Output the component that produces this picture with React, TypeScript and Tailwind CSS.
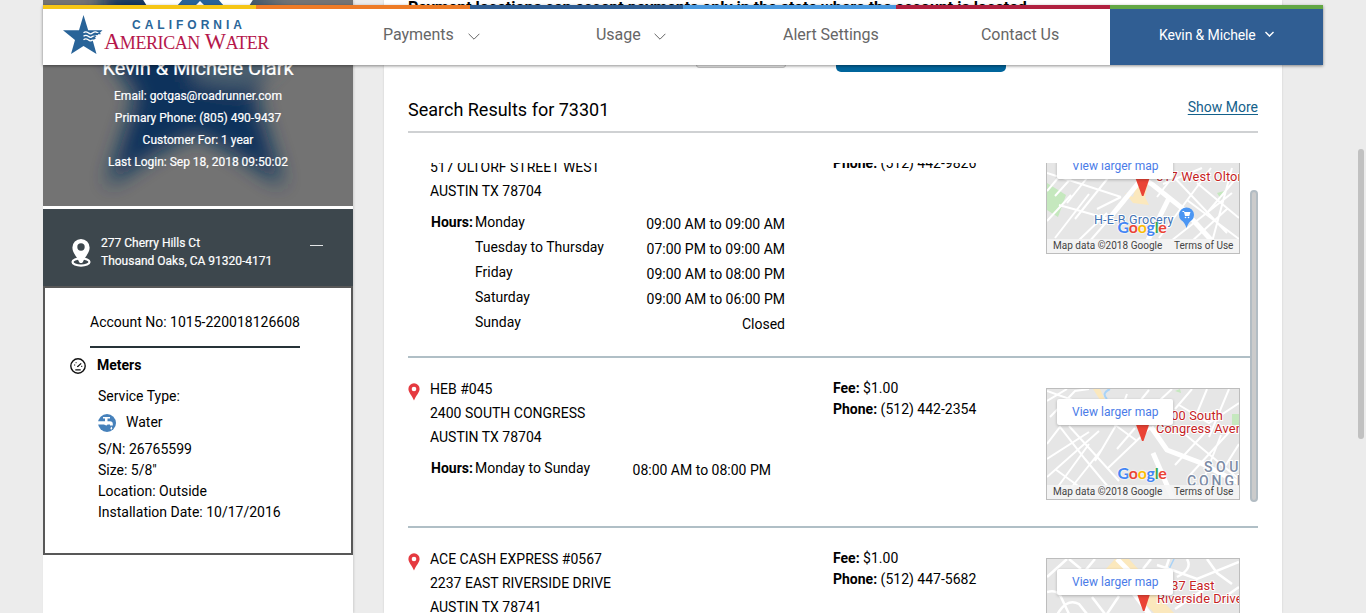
import React from "react";

type Hours = { day: string; time: string };
type Place = {
  name: string;
  street: string;
  city: string;
  phone: string;
  hours: Hours[];
  timeWidth: string;
  height: string;
  map: React.ReactNode;
};

const STRIPES = ["bg-[#f6c615]", "bg-[#ee7b26]", "bg-[#305e93]", "bg-[#4a9ae0]", "bg-[#b0203f]", "bg-[#62a744]"];

function BrandStar({ className, viewBox }: { className: string; viewBox: string }) {
  return (
    <svg className={className} viewBox={viewBox}>
      <path
        fill="#286398"
        d="M20.5 0 25.2 15.3H39.5L29.6 25 33.5 39 20.5 31 8 39 12 25 0 15.3H16Z"
      />
      <path
        fill="none"
        stroke="#fff"
        strokeWidth="1.3"
        d="M20.5 17.8q2.3-2 4.7 0t4.7 0 4.7 0 4.7 0M20.5 21.3q2.3-2 4.7 0t4.7 0 4.7 0M20.5 24.800q2.3-2 4.7 0t4.7 0"
      />
      <path fill="none" stroke="#286398" strokeWidth="1.2" d="M29.5 19.3q2 1.6 4 0t4-.3M29 23q1.7 1.5 3.4 0" />
    </svg>
  );
}

function Chevron({ className, width }: { className: string; width: number }) {
  return (
    <svg className={className} viewBox="0 0 12 7" fill="none" stroke="currentColor" strokeWidth={width}>
      <path d="M.6.8 6 6.2 11.4.8" />
    </svg>
  );
}

function Header() {
  return (
    <header className="absolute left-[43px] top-[5px] z-20 h-[60px] w-[1280px] bg-white shadow-[0_1px_3px_rgba(0,0,0,0.45)]">
      <div className="flex h-1">
        {STRIPES.map((c) => (
          <div key={c} className={`flex-1 ${c}`} />
        ))}
      </div>
      <div className="flex h-14">
        <div className="flex w-[289px] shrink-0 pl-5 pt-[6px]">
          <BrandStar className="h-10 w-10 shrink-0" viewBox="0 0 40 40" />
          <div className="w-[168px] pl-px">
            <div className="pl-7 pt-[3px] font-['Liberation_Sans'] text-[12px] font-bold leading-[14px] tracking-[4px] text-[#2a6699]">
              CALIFORNIA
            </div>
            <div className="whitespace-nowrap font-['Liberation_Serif'] text-[22.500px] leading-[19px] tracking-[-0.42px] text-[#b5174b]">
              A<span className="text-[18px]">MERICAN</span> W<span className="text-[18px]">ATER</span>
            </div>
          </div>
        </div>
        <nav className="flex grow items-start pt-[14px] text-[16px] leading-6 tracking-[-0.04px] text-[#666]">
          <a className="ml-[51px] flex w-[213px] items-center">
            Payments <Chevron className="ml-[14px] mt-[2px] h-[7px] w-3" width={1} />
          </a>
          <a className="flex w-[187px] items-center">
            Usage <Chevron className="ml-[13px] mt-[2px] h-[7px] w-3" width={1} />
          </a>
          <a className="w-[198px]">Alert Settings</a>
          <a className="whitespace-nowrap">Contact Us</a>
        </nav>
        <div className="flex w-[213px] items-start bg-[#305e93] pl-[49px] pt-[14px] text-[14px] leading-6 tracking-[-0.12px] text-white">
          Kevin &amp; Michele
          <Chevron className="ml-[9px] mt-2 h-[6px] w-[9px]" width={2} />
        </div>
      </div>
    </header>
  );
}

function Profile() {
  return (
    <section className="relative h-[206px] overflow-hidden bg-[#737373]">
      <svg className="absolute left-0 top-0 h-[206px] w-[310px]" viewBox="0 0 310 206">
        <defs>
          <filter id="soft" x="-20%" y="-20%" width="140%" height="140%">
            <feGaussianBlur stdDeviation="10" />
          </filter>
        </defs>
        <g filter="url(#soft)">
          <path fill="#0b335b" d="M64 186 94 96 62 50 60-10H220L226 60 212 96 240 186 190 152 153 134 115 152Z" />
          <path fill="#4b6070" d="M148 0H235V62L200 90 150 82Z" />
        </g>
        <circle cx="155" cy="-29" r="62" fill="#fff" />
        <path fill="#286398" d="M140-1H175L181 6H162L157 1 152 6H134Z" />
      </svg>
      <div className="relative flex flex-col items-center pt-[54px] text-[12px] leading-[22px] text-white [-webkit-text-stroke:0.2px_#fff]">
        <h2 className="mb-[3px] text-[20px] font-normal leading-7">Kevin &amp; Michele Clark</h2>
        <p>Email: gotgas@roadrunner.com</p>
        <p>Primary Phone: (805) 490-9437</p>
        <p>Customer For: 1 year</p>
        <p>Last Login: Sep 18, 2018 09:50:02</p>
      </div>
    </section>
  );
}

function Sidebar() {
  return (
    <aside className="h-[613px] w-[310px] shrink-0 bg-white shadow-[1px_0_2px_rgba(0,0,0,0.12)]">
      <Profile />
      <div className="mt-[3px] flex h-[77px] bg-[#3d474d] pl-7 text-[12px] leading-[18px] text-white [-webkit-text-stroke:0.2px_#fff]">
        <svg className="mt-[30px] h-7 w-5 shrink-0" viewBox="0 0 20 28">
          <ellipse cx="10" cy="23" rx="8.500" ry="3.600" fill="none" stroke="#fff" strokeWidth="2.200" />
          <path
            d="M10 0a8.6 8.6 0 0 0-8.6 8.8C1.4 14 6 17.5 8.2 23.2q1.8 1.8 3.6 0C14 17.500 18.600 14 18.600 8.800A8.600 8.600 0 0 0 10 0Z"
            fill="#fff"
          />
          <circle cx="10" cy="8" r="3.700" fill="#3d474d" />
        </svg>
        <div className="ml-[10px] w-[209px] pt-[25px]">
          277 Cherry Hills Ct
          <br />
          Thousand Oaks, CA 91320-4171
        </div>
        <div className="mt-9 h-px w-[13px] bg-[#e4e6e7]" />
      </div>
      <div className="h-[269px] border-2 border-[#585858] pt-[22px] text-[14px] leading-[21px] text-black">
        <div className="ml-[45px] h-[38px] w-[210px] whitespace-nowrap border-b-2 border-[#263238] pt-[2px]">
          Account No: 1015-220018126608
        </div>
        <div className="flex pl-[25px] pt-[7px] font-bold">
          <svg className="mt-[3px] h-4 w-4" viewBox="0 0 16 16" fill="none" stroke="#111" strokeWidth="1.400">
            <circle cx="8" cy="8" r="7.200" />
            <path d="M7.500 8.700 11.200 5.400M5.300 11.800h5.400" strokeWidth="1.200" />
            <path d="M4 7h1.200M5.600 4.700h1M11 8.300h1.300" strokeWidth="1" />
            <circle cx="7.600" cy="8.500" r=".6" fill="#111" stroke="none" />
          </svg>
          <span className="ml-[11px]">Meters</span>
        </div>
        <div className="pl-[53px] pt-[10px]">
          <div>Service Type:</div>
          <div className="flex h-8 items-start pt-[5px]">
            <svg className="mt-[2px] h-[18px] w-[18px]" viewBox="0 0 18 18">
              <circle cx="9" cy="9" r="9" fill="#4681bb" />
              <path
                fill="#fff"
                d="M5 3h7v1.500H9.500V7.300H12Q14.800 7.300 14.800 10V11.500H12V10.500H9.500Q8.700 12 7 11L6 10.500H0V7.300H7V4.500H5ZM13.400 12.600 14.300 14.300Q14.200 15.500 13.300 15.500T12.400 14.300Z"
              />
            </svg>
            <span className="ml-[10px]">Water</span>
          </div>
          <div>S/N: 26765599</div>
          <div>Size: 5/8"</div>
          <div>Location: Outside</div>
          <div>Installation Date: 10/17/2016</div>
        </div>
      </div>
    </aside>
  );
}

const LABEL = "font-['Roboto'] [paint-order:stroke] stroke-white stroke-[2px]";

const oltorfMap = (
  <svg className="h-[110px] w-[192px]" viewBox="0 0 192 110">
    <rect width="192" height="110" fill="#e6e6e6" />
    <path fill="#c5e8be" d="M0 40 19 52 11 74 0 67ZM170 50 177 48 174 56Z" />
    <path fill="#fbe8bd" d="M78 50 86 54 92 32 104 28 98 54 102 62 86 60Z" />
    <path
      fill="none"
      stroke="#fff"
      strokeWidth="2"
      d="M0 48 22 22M8 53 36 22M20 60 48 25M0 30 74 54M12 62 62 76M28 76 65 30M50 66 74 54M0 78 24 52M8 95 42 51M30 99 60 70M42 99 78 58M124 31 180 90M116 41 155 25M110 54 128 31M112 95 164 25M124 98 185 50M144 99 180 66M150 40 192 75M140 57 192 96M185 25 165 99M192 32 160 70"
    />
    <path fill="none" stroke="#fff" strokeWidth="5" d="M73 20 106 42 135 65 166 99M65 72 93 38M100 99 123 53" />
    <text x="109" y="38" fontSize="12.800" letterSpacing=".12" fill="#c5221f" className={LABEL}>517 West Oltorf St</text>
    <text x="47" y="80.500" fontSize="12.500" letterSpacing=".2" fill="#4273b5" className={LABEL}>H-E-B Grocery</text>
    <path fill="#4b96f3" d="M139 84Q137 78 133.500 76a7.500 7.500 0 1 1 11 0Q141 78 139 84Z" transform="translate(.5 1)" />
    <path fill="#fff" d="M135.500 68h1.500l.5 1h6l-1.200 4h-4.300l-1-4H135.500Z" />
    <circle cx="138.500" cy="74.500" r=".8" fill="#fff" /><circle cx="141.500" cy="74.500" r=".8" fill="#fff" />
    <path fill="#ea4335" d="M88 34H103L96.500 53H95Z" />
  </svg>
);

const congressMap = (
  <svg className="h-[110px] w-[192px]" viewBox="0 0 192 110">
    <rect width="192" height="110" fill="#e6e6e6" />
    <path fill="none" stroke="#a9d3f7" strokeWidth="2" d="M63 0Q54 4 60 10" />
    <path fill="#fbe8bd" d="M46 0H53L58 11H53Z" />
    <path fill="#c5e8be" d="M128 2 133 0 134 4ZM185 25H192V36H185Z" />
    <path
      fill="none"
      stroke="#fff"
      strokeWidth="2"
      d="M0 12 20 0M3 28 28 2 42 0M0 55 13 38 38 70 62 99M22 37 72 92M0 70 42 43M0 88 52 42M10 99 42 55M24 99 55 60M8 80 34 99M80 5 68 38 48 72M70 60 88 39M60 80 104 38M102 1 93 12M125 0 112 12M0 2 28 12 55 11M145 0 128 20M132 16 162 34 192 14M150 24 160 0M134 42 192 90M128 76 164 37M142 87 185 40M154 97 174 46M165 98 192 55M182 0 162 48M60 30 90 52"
    />
    <path fill="none" stroke="#fff" strokeWidth="5" d="M104 38 120 61 154 74 192 94M106 64 126 110" />
    <text x="117" y="30.500" fontSize="12.800" letterSpacing=".1" fill="#c5221f" className={LABEL}>400 South</text>
    <text x="109" y="44" fontSize="12.800" letterSpacing=".12" fill="#c5221f" className={LABEL}>Congress Avenue</text>
    <text x="157" y="83" fontSize="14" fontWeight="500" letterSpacing="3.600" fill="#7c8ba5" className={LABEL}>SOUTH</text>
    <text x="140" y="97" fontSize="14" fontWeight="500" letterSpacing="2.900" fill="#7c8ba5" className={LABEL}>CONGRESS</text>
    <path fill="#ea4335" d="M88 33H103L96.500 52H95Z" />
  </svg>
);

const riversideMap = (
  <svg className="h-[110px] w-[192px]" viewBox="0 0 192 110">
    <rect width="192" height="110" fill="#e6e6e6" />
    <path fill="#fbe8bd" d="M58 11 68 0H82L92 11ZM86 32 104 30 128 55H108Z" />
    <path fill="none" stroke="#a9d3f7" strokeWidth="1.500" d="M127 0 119 16" />
    <path
      fill="none"
      stroke="#fff"
      strokeWidth="2.500"
      d="M0 18 20 0M22 0 34 10M48 0 38 12M0 33Q10 30 14 38L22 55M8 60Q18 38 32 45L44 60M45 38 58 55M60 55 72 37M110 6 128 12 150 20 192 3M122 0 118 12M130 18Q146 10 140 0M128 50 165 25M160 0 170 14 185 25M175 40 192 28M104 0 96 10"
    />
    <path fill="none" stroke="#fff" strokeWidth="5" d="M70 0 82 12M86 33 106 60" />
    <text x="117" y="30.500" fontSize="12.800" letterSpacing=".1" fill="#c5221f" className={LABEL}>237 East</text>
    <text x="110" y="43.500" fontSize="12.800" letterSpacing=".12" fill="#c5221f" className={LABEL}>Riverside Drive</text>
    <path fill="#ea4335" d="M89 32H104L97.500 52H96Z" />
  </svg>
);

const PLACES: Place[] = [
  {
    name: "HEB #012",
    street: "517 OLTORF STREET WEST",
    city: "AUSTIN TX 78704",
    phone: "(512) 442-9826",
    hours: [
      { day: "Monday", time: "09:00 AM to 09:00 AM" },
      { day: "Tuesday to Thursday", time: "07:00 PM to 09:00 AM" },
      { day: "Friday", time: "09:00 AM to 08:00 PM" },
      { day: "Saturday", time: "09:00 AM to 06:00 PM" },
      { day: "Sunday", time: "Closed" },
    ],
    timeWidth: "w-[310px]",
    height: "h-[246px]",
    map: oltorfMap,
  },
  {
    name: "HEB #045",
    street: "2400 SOUTH CONGRESS",
    city: "AUSTIN TX 78704",
    phone: "(512) 442-2354",
    hours: [{ day: "Monday to Sunday", time: "08:00 AM to 08:00 PM" }],
    timeWidth: "w-[296px]",
    height: "h-[170px]",
    map: congressMap,
  },
  {
    name: "ACE CASH EXPRESS #0567",
    street: "2237 EAST RIVERSIDE DRIVE",
    city: "AUSTIN TX 78741",
    phone: "(512) 447-5682",
    hours: [],
    timeWidth: "w-[296px]",
    height: "h-[170px]",
    map: riversideMap,
  },
];

function MapCard({ children }: { children: React.ReactNode }) {
  return (
    <div className="relative mt-[30px] h-28 w-[194px] shrink-0 overflow-hidden border border-[#bdbdbd]">
      {children}
      <div className="absolute left-[10px] top-[10px] h-[26px] w-[116px] rounded-[2px] bg-white pl-[15px] text-[12px] leading-[26px] tracking-[0.02px] text-[#4a7be8] shadow-[0_1px_3px_rgba(0,0,0,0.25)]">
        View larger map
      </div>
      <div className="absolute left-[70.500px] top-[74px] font-['Lato'] text-[16px] font-bold leading-5 tracking-[-0.3px] [text-shadow:0_0_2px_#fff,0_0_2px_#fff]">
        <span className="text-[#4285f4]">G</span>
        <span className="text-[#ea4335]">o</span>
        <span className="text-[#fbbc05]">o</span>
        <span className="text-[#4285f4]">g</span>
        <span className="text-[#34a853]">l</span>
        <span className="text-[#ea4335]">e</span>
      </div>
      <div className="absolute bottom-0 left-0 flex h-[14px] w-full whitespace-nowrap bg-[#f5f5f5]/85 pl-[6px] text-[10px] leading-[14px] tracking-[0.02px] text-[#444]">
        <span className="w-[121px]">Map data ©2018 Google</span>
        <span>Terms of Use</span>
      </div>
    </div>
  );
}

function PlaceRow({ place }: { place: Place }) {
  return (
    <article className={`flex shrink-0 border-b-2 border-[#b0bfc6] text-[14px] text-black ${place.height}`}>
      <svg className="mt-[25px] h-[18px] w-3 shrink-0" viewBox="0 0 12 18">
        <path fill="#e53a40" d="M6 .3A5.600 5.600 0 0 0 .4 6C.4 9.500 4 12.500 6 17.500 8 12.500 11.600 9.500 11.600 6A5.600 5.600 0 0 0 6 .3Z" />
        <circle cx="6" cy="6" r="2.300" fill="#fff" />
      </svg>
      <div className="ml-[10px] w-[403px] shrink-0 pt-[19px] leading-6">
        <div>{place.name}</div>
        <div>{place.street}</div>
        <div>{place.city}</div>
        <div className="ml-px flex pt-[7px]">
          {place.hours.length > 0 && <b className="w-11 shrink-0 font-bold">Hours:</b>}
          <div className={place.timeWidth}>
            {place.hours.map((h) => (
              <div key={h.day} className="flex h-[25px] justify-between">
                <span>{h.day}</span>
                <span className="pt-[2px]">{h.time}</span>
              </div>
            ))}
          </div>
        </div>
      </div>
      <div className="w-[213px] shrink-0 pt-5 leading-[21px]">
        <div><b>Fee:</b> $1.00</div>
        <div><b>Phone:</b> {place.phone}</div>
      </div>
      <MapCard>{place.map}</MapCard>
    </article>
  );
}

function Results() {
  return (
    <main className="h-[613px] w-[898px] shrink-0 bg-white px-6 shadow-[0_0_2px_rgba(0,0,0,0.12)]">
      <div className="h-[18px] whitespace-nowrap text-[16px] font-bold leading-[15px] text-black">
        Payment locations can accept payments only in the state where the account is located.
      </div>
      <div className="flex h-[54px] items-end pl-72">
        <div className="mb-1 h-[34px] w-[90px] rounded-[3px] border border-[#c4c4c4] bg-[#f1f1f1]" />
        <div className="ml-[50px] h-[38px] w-[170px] rounded-[5px] bg-[#00659c]" />
      </div>
      <div className="flex h-[61px] justify-between border-b-2 border-[#cfd1d3] text-black">
        <h1 className="pt-[26px] text-[18px] leading-6">Search Results for 73301</h1>
        <a className="pt-[25px] text-[14px] leading-5 text-[#14618b] underline underline-offset-2">Show More</a>
      </div>
      <div className="relative mt-[30px] h-[450px] overflow-hidden">
        <div className="-mt-[51px] flex flex-col">
          {PLACES.map((p) => (
            <PlaceRow key={p.name} place={p} />
          ))}
        </div>
        <div className="absolute right-0 top-[27px] h-[312px] w-2 rounded-[4px] border-2 border-[#b2bcc3] bg-[#cbcbcb]" />
      </div>
    </main>
  );
}

export default function App() {
  return (
    <div className="relative h-[613px] w-[1366px] overflow-hidden bg-[#ececec] font-['Roboto',sans-serif]">
      <Header />
      <div className="flex gap-[31px] pl-[43px]">
        <Sidebar />
        <Results />
      </div>
      <div className="absolute right-[2px] top-[149px] z-30 h-[290px] w-[6px] rounded-[3px] bg-[#c1c1c1]" />
    </div>
  );
}
